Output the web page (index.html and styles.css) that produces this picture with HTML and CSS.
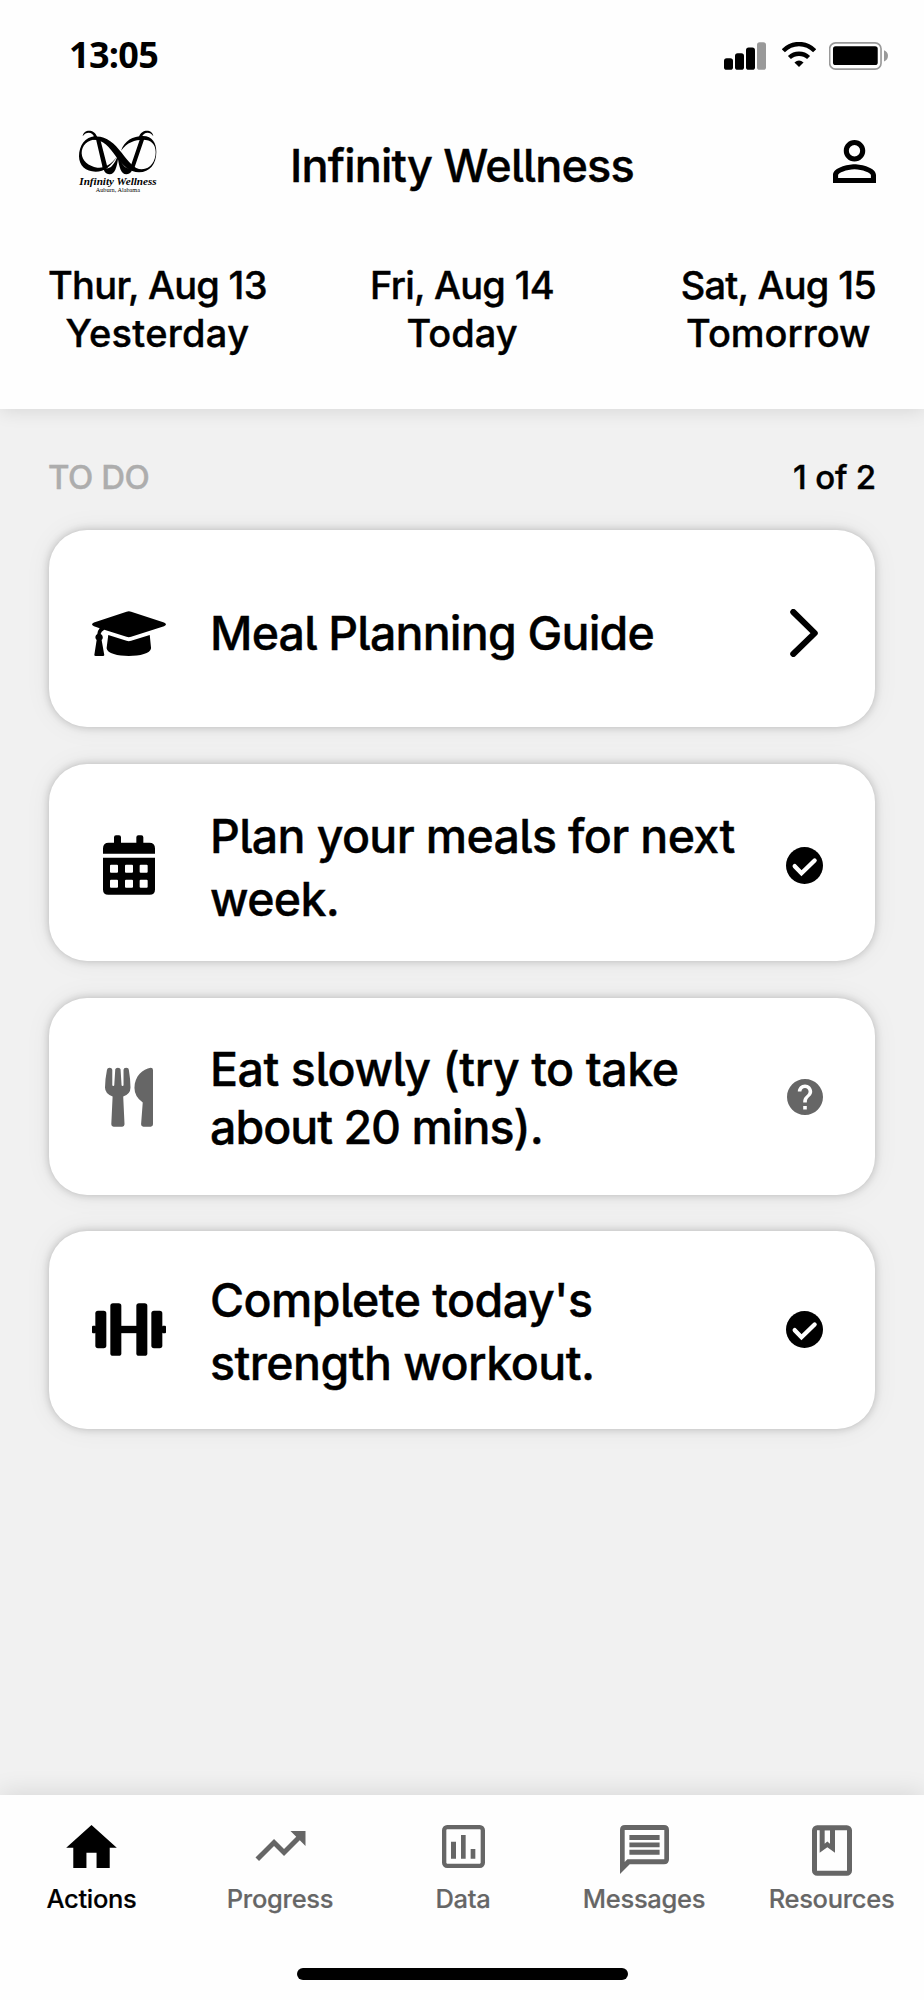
FILE: index.html
```html
<!DOCTYPE html>
<html lang="en">
<head>
    <meta charset="UTF-8">
    <meta name="viewport" content="width=device-width, initial-scale=1.0">
    <title>Infinity Wellness</title>
    <link rel="stylesheet" href="styles.css">
</head>
<body>
    <div class="app">
        <header class="top">
            <div class="status">
                <span class="time">13:05</span>
                <div class="status-icons">
                    <svg class="signal" viewBox="0 0 126 83">
                        <rect x="0" y="48" width="27" height="35" rx="8"/>
                        <rect x="33" y="33" width="27" height="50" rx="8"/>
                        <rect x="66" y="16" width="27" height="67" rx="8"/>
                        <rect x="99" y="0" width="27" height="83" rx="8" fill="#999"/>
                    </svg>
                    <svg class="wifi" viewBox="0 0 101 83">
                        <path d="M4 26a64 64 0 0 1 93 0M22 46a42 42 0 0 1 57 0" fill="none" stroke="#000" stroke-width="13"/>
                        <path d="M37 61q13.500-13 27 0L50.500 74z"/>
                    </svg>
                    <svg class="battery" viewBox="0 0 178 83">
                        <rect x="2" y="2" width="155" height="79" rx="18" fill="none" stroke="#999" stroke-width="5"/>
                        <rect x="12" y="12" width="135" height="57" rx="8"/>
                        <path d="M166 24q12 5 12 17t-12 17z" fill="#999"/>
                    </svg>
                </div>
            </div>

            <div class="title-row">
                <svg class="logo" viewBox="-6 0 246 204">
                    <!-- loops -->
                    <path d="M54 16C18 14 0 45 0 76c0 28 20 46 50 46 27 0 46-16 65-47-20 28-40 37-60 35C28 106 9 90 8 67 8 44 24 26 56 24z"/>
                    <path d="M42 17c38-5 62 18 86 48 20 26 38 50 60 50 28-1 42-26 42-52 0-24-14-37-38-37-24 0-48 8-66 33 10-30 36-44 66-44 28 0 40 21 40 48 0 36-20 61-52 61-28 0-50-22-68-46C90 46 74 26 42 26z"/>
                    <!-- W -->
                    <path d="M50 20l12-2 24 94-14 2zM185 18l12 2-32 94-12-2z"/>
                    <path d="M70 103c6 12 18 12 28 3 9-9 14-20 19-33 5 13 10 24 19 33 10 9 22 9 28-3-4 15-8 27-22 27-16 0-22-24-25-46-3 22-9 46-25 46-14 0-18-12-22-27z"/>
                    <!-- antennae -->
                    <path d="M11 16C14-6 46-6 54 17l-8 3C42 3 22 0 11 16zM223 16c-3-22-35-22-43 1l8 3c5-17 25-20 35-4z"/>
                    <text class="logo-name" x="1" y="161" textLength="232" lengthAdjust="spacingAndGlyphs">Infinity Wellness</text>
                    <text class="logo-place" x="50" y="184" textLength="133" lengthAdjust="spacingAndGlyphs">Auburn, Alabama</text>
                </svg>
                <h1>Infinity Wellness</h1>
                <svg class="profile" viewBox="4 4 16 16">
                    <path d="M12 5.900a2.100 2.100 0 1 1 0 4.200 2.100 2.100 0 0 1 0-4.200m0 9c2.970 0 6.100 1.460 6.100 2.100v1.100H5.900V17c0-.64 3.130-2.100 6.100-2.100M12 4C9.790 4 8 5.790 8 8s1.790 4 4 4 4-1.790 4-4-1.790-4-4-4zm0 9c-2.670 0-8 1.340-8 4v3h16v-3c0-2.660-5.330-4-8-4z"/>
                </svg>
            </div>

            <div class="days">
                <div class="day yesterday"><span>Thur, Aug 13</span><span class="rel">Yesterday</span></div>
                <div class="day today"><span>Fri, Aug 14</span><span class="rel">Today</span></div>
                <div class="day tomorrow"><span>Sat, Aug 15</span><span class="rel">Tomorrow</span></div>
            </div>
        </header>

        <main class="content">
            <div class="section-head">
                <span class="label">TO DO</span>
                <span class="count">1 of 2</span>
            </div>

            <div class="cards">
                <div class="card guide">
                    <div class="card-icon">
                        <svg width="74" height="45" viewBox="0 0 223 135">
                            <path d="M104 2q7-3 14 0l99 32q12 6 0 12l-99 31q-7 3-14 0L37 56q-10 5-11 13a11 11 0 0 1 3 18l8 45q0 3-4 3H11q-4 0-4-3l7-45a11 11 0 0 1 2-18q1-10 7-17L6 46q-12-6 0-12z"/>
                            <path d="M49 72l55 17q7 3 14 0l56-17 4 40c-3 31-131 31-134 0z"/>
                        </svg>
                    </div>
                    <p>Meal Planning Guide</p>
                    <svg width="28" height="48" viewBox="0 0 82 143">
                        <path d="M9 9l64 63L9 134" fill="none" stroke="#000" stroke-width="18" stroke-linecap="round" stroke-linejoin="round"/>
                    </svg>
                </div>

                <div class="card plan">
                    <div class="card-icon">
                        <svg width="52" height="60" viewBox="0 0 156 179">
                            <path d="M0 56V40q0-17 17-17h16V6q0-6 6-6h9q6 0 6 6v17h46V6q0-6 6-6h9q6 0 6 6v17h18q17 0 17 17v16z"/>
                            <path fill-rule="evenodd" d="M0 68h156v95q0 16-16 16H16q-16 0-16-16zM24 89q-3 0-3 3v18q0 3 3 3h18q3 0 3-3V92q0-3-3-3zM69 89q-3 0-3 3v18q0 3 3 3h18q3 0 3-3V92q0-3-3-3zM113 89q-3 0-3 3v18q0 3 3 3h18q3 0 3-3V92q0-3-3-3zM24 134q-3 0-3 3v18q0 3 3 3h18q3 0 3-3v-18q0-3-3-3zM69 134q-3 0-3 3v18q0 3 3 3h18q3 0 3-3v-18q0-3-3-3zM113 134q-3 0-3 3v18q0 3 3 3h18q3 0 3-3v-18q0-3-3-3z"/>
                        </svg>
                    </div>
                    <p>Plan your meals for next<br>week.</p>
                    <svg width="37" height="37" viewBox="0 0 110 110">
                        <circle cx="55" cy="55" r="55"/>
                        <path d="M26 57l20 21 39-38" fill="none" stroke="#fff" stroke-width="13" stroke-linecap="round"/>
                    </svg>
                </div>

                <div class="card eat">
                    <div class="card-icon">
                        <svg width="48" height="60" viewBox="0 0 145 179" fill="#666">
                            <path d="M6 7q1-6 8-6t8 6v46q0 3 3 3t3-3l3-47q1-5 8-5t8 5l3 47q0 3 3 3t3-3V7q0-6 8-6t8 6q5 30 5 54 0 20-22 27l4 84q0 7-7 7H26q-7 0-7-7l4-84Q0 80 0 61 0 37 6 7z"/>
                            <path d="M138 1q7 0 7 7v164q0 7-7 7h-22q-7 0-7-7l5-66Q89 88 89 62C89 26 115 4 138 1z"/>
                        </svg>
                    </div>
                    <p>Eat slowly (try to take<br><span class="tight">about 20 mins).</span></p>
                    <svg width="36" height="36" viewBox="2 2 20 20" fill="#666">
                        <path d="M12 2C6.480 2 2 6.480 2 12s4.480 10 10 10 10-4.480 10-10S17.520 2 12 2zm1 17h-2v-2h2v2zm2.070-7.750l-.9.92C13.450 12.900 13 13.500 13 15h-2v-.5c0-1.100.45-2.100 1.170-2.830l1.240-1.260c.37-.36.59-.86.59-1.410 0-1.100-.9-2-2-2s-2 .9-2 2H8c0-2.210 1.790-4 4-4s4 1.790 4 4c0 .88-.36 1.680-.93 2.250z"/>
                    </svg>
                </div>

                <div class="card workout">
                    <div class="card-icon">
                        <svg width="74" height="53" viewBox="0 0 222 158">
                            <rect x="0" y="68" width="12" height="22" rx="3"/>
                            <rect x="10" y="23" width="33" height="112" rx="8"/>
                            <rect x="55" y="0" width="33" height="158" rx="8"/>
                            <rect x="86" y="68" width="50" height="22"/>
                            <rect x="133" y="0" width="33" height="158" rx="8"/>
                            <rect x="178" y="23" width="33" height="112" rx="8"/>
                            <rect x="210" y="68" width="12" height="22" rx="3"/>
                        </svg>
                    </div>
                    <p>Complete today's<br>strength workout.</p>
                    <svg width="37" height="37" viewBox="0 0 110 110">
                        <circle cx="55" cy="55" r="55"/>
                        <path d="M26 57l20 21 39-38" fill="none" stroke="#fff" stroke-width="13" stroke-linecap="round"/>
                    </svg>
                </div>
            </div>
        </main>

        <nav class="tabs">
            <a class="tab actions">
                <svg width="51" height="43" viewBox="2 3 20 17"><path d="M10 20v-6h4v6h5.200v-8H22L12 3 2 12h2.800v8z"/></svg>
                <span>Actions</span>
            </a>
            <a class="tab progress">
                <svg class="trend" width="51" height="30" viewBox="2 6 20 12"><path d="M16 6l2.290 2.290-4.880 4.880-4-4L2 16.590 3.410 18l6-6 4 4 6.300-6.290L22 12V6z"/></svg>
                <span>Progress</span>
            </a>
            <a class="tab data">
                <svg width="43" height="43" viewBox="0 0 129 129">
                    <rect x="6.500" y="6.500" width="116" height="116" rx="9" fill="none" stroke="#666" stroke-width="13"/>
                    <path d="M27 50h15v51H27zM57 30h14v71H57zM86 72h14v29H86z"/>
                </svg>
                <span>Data</span>
            </a>
            <a class="tab messages">
                <svg width="49" height="49" viewBox="0 0 146 146">
                    <path fill-rule="evenodd" d="M15 0h116q15 0 15 15v87q0 15-15 15H29L0 146V15Q0 0 15 0zM14 15v95l8-8h110V15z"/>
                    <path d="M28 30h90v15H28zM28 52h90v14H28zM28 74h90v15H28z"/>
                </svg>
                <span>Messages</span>
            </a>
            <a class="tab resources">
                <svg width="40" height="51" viewBox="0 0 120 152">
                    <rect x="7.500" y="7.500" width="105" height="137" rx="8" fill="none" stroke="#666" stroke-width="15"/>
                    <path fill-rule="evenodd" d="M23 10h46v73L46 66 23 83zM38 15v41l8-7 8 7V15z"/>
                </svg>
                <span>Resources</span>
            </a>
            <div class="home-bar"></div>
        </nav>
    </div>
</body>
</html>
```
FILE: styles.css
```css
* {
    box-sizing: border-box;
}
body {
    margin: 0;
    background-color: #f1f1f1;
    color: #000;
    font-family: Inter, "Liberation Sans", sans-serif;
    font-weight: 500;
    font-feature-settings: "cv05";
}
svg {
    display: block;
    flex-shrink: 0;
}
.app {
    display: flex;
    flex-direction: column;
    width: 924px;
    height: 2000px;
    overflow: hidden;
}

/* header */
.top {
    height: 409px;
    background-color: #fefefe;
    box-shadow: 0 2px 18px rgba(0, 0, 0, 0.11);
}
.status {
    display: flex;
    justify-content: space-between;
    align-items: center;
    height: 111px;
    padding: 0 36px 0 69px;
}
.time {
    font-family: "Open Sans", sans-serif;
    font-weight: 700;
    font-size: 36px;
    line-height: 40px;
    padding-bottom: 2px;
    letter-spacing: -0.7px;
}
.status-icons {
    display: flex;
}
.signal {
    width: 42px;
    height: 28px;
    margin-right: 16px;
}
.wifi {
    width: 34px;
    height: 28px;
    margin-right: 13px;
}
.battery {
    width: 59px;
    height: 28px;
}
.title-row {
    display: grid;
    grid-template-columns: 1fr auto 1fr;
    align-items: center;
    height: 108px;
    padding: 0 48px;
}
.logo {
    width: 82px;
    height: 68px;
    margin-left: 29px;
    overflow: visible;
}
.logo-name {
    font-family: "Liberation Serif", serif;
    font-style: italic;
    font-weight: 700;
    font-size: 28px;
}
.logo-place {
    font-family: "Liberation Serif", serif;
    font-weight: 400;
    font-size: 18px;
}
h1 {
    margin: 0;
    font-weight: 500;
    font-size: 45px;
    line-height: 54px;
    letter-spacing: -0.8px;
    padding-top: 1px;
}
h1, .day, .section-head, .card p {
    -webkit-text-stroke: 0.4px;
}
.profile {
    width: 43px;
    height: 43px;
    margin-bottom: 7px;
    justify-self: end;
}
.days {
    display: grid;
    grid-template-columns: 1fr auto 1fr;
    padding: 42px 48px 0;
}
.day {
    display: flex;
    flex-direction: column;
    align-items: center;
    font-size: 38px;
    line-height: 48px;
    letter-spacing: -0.7px;
}
.yesterday {
    justify-self: start;
}
.tomorrow {
    justify-self: end;
}
.rel {
    letter-spacing: 0;
}
.yesterday .rel {
    letter-spacing: 0.3px;
}

/* to do list */
.content {
    flex: 1;
    padding: 0 48px;
}
.section-head {
    display: flex;
    justify-content: space-between;
    padding-top: 48px;
    font-size: 33px;
    line-height: 40px;
    letter-spacing: -0.5px;
}
.label {
    color: #adadad;
}
.count {
    letter-spacing: -0.2px;
}
.cards {
    display: flex;
    flex-direction: column;
    gap: 36.5px;
    padding: 33px 1px 0;
}
.card {
    display: flex;
    align-items: center;
    height: 197.3px;
    padding: 0 52px 0 39px;
    background-color: #fff;
    border-radius: 38px;
    box-shadow: 0 0 8px rgba(0, 0, 0, 0.22), 0 0 28px rgba(0, 0, 0, 0.06);
}
.card p {
    flex: 1;
    margin: 0;
    font-size: 46.5px;
    line-height: 63px;
    letter-spacing: -0.65px;
    white-space: nowrap;
}
.card-icon {
    display: flex;
    justify-content: center;
    width: 82px;
    margin-right: 40px;
}
.guide {
    padding-top: 9px;
    padding-right: 57px;
}
.guide p {
    padding-top: 1px;
    letter-spacing: -0.8px;
}
.plan {
    padding-top: 6px;
}
.plan p {
    padding-top: 5px;
}
.eat {
    padding-top: 2px;
}
.eat p {
    line-height: 58px;
    padding-top: 2px;
    letter-spacing: -0.45px;
}
.card .tight {
    letter-spacing: -1px;
}
.workout {
    padding-bottom: 1px;
}
.workout p {
    padding-top: 5px;
    letter-spacing: -0.55px;
}

/* bottom tabs */
.tabs {
    display: grid;
    grid-template-columns: 183px 194px 172px 190px 185px;
    align-content: start;
    height: 205px;
    padding-top: 30px;
    background-color: #fefefe;
    box-shadow: 0 -2px 24px rgba(0, 0, 0, 0.11);
}
.tab {
    display: flex;
    flex-direction: column;
    align-items: center;
    justify-content: space-between;
    height: 89px;
    color: #666;
    fill: #666;
    font-size: 25.5px;
    line-height: 30px;
    letter-spacing: -0.3px;
    -webkit-text-stroke: 0.2px;
}
.tab.actions {
    color: #000;
    fill: #000;
}
.trend {
    margin-top: 6px;
}
.home-bar {
    grid-column: 1 / -1;
    justify-self: center;
    width: 331px;
    height: 12px;
    margin-top: 54px;
    border-radius: 6px;
    background-color: #000;
}
```
